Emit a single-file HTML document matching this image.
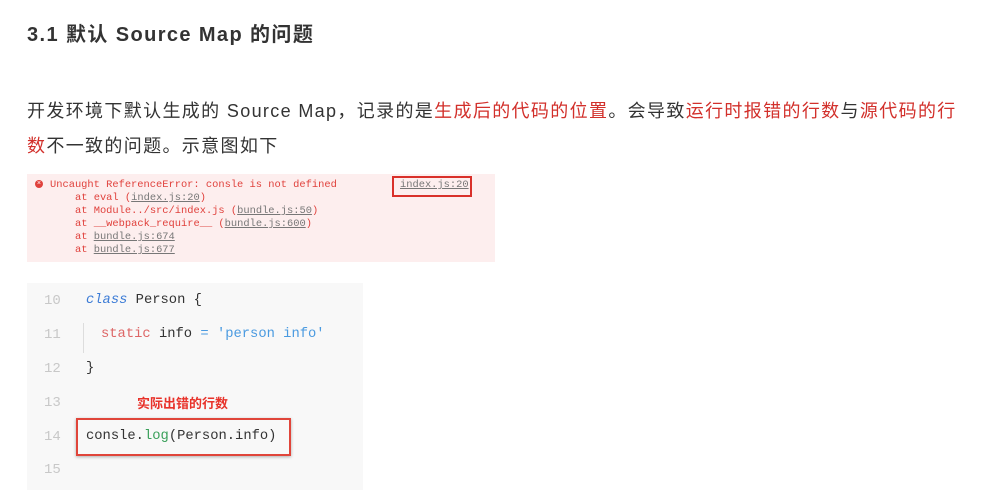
<!DOCTYPE html>
<html><head><meta charset="utf-8"><style>
body{margin:0;width:993px;height:502px;background:#fff;position:relative;overflow:hidden;font-family:"Liberation Sans","Noto Sans CJK SC",sans-serif;color:#333}
.a{position:absolute;white-space:nowrap}
h1{position:absolute;left:27px;top:18px;margin:0;font-size:20px;font-weight:bold;color:#333;letter-spacing:1.4px}
.p{font-size:18px;color:#333;left:27px;letter-spacing:1.35px}
.r{color:#d2302b}
.err{position:absolute;left:27px;top:174px;width:468px;height:88px;background:#fdeeee;font-family:"Liberation Mono",monospace;font-size:10.4px;color:#e0413c;line-height:13.2px}
.err u{color:#777}
.code{position:absolute;left:27px;top:283px;width:336px;height:207px;background:#f8f8f8;font-family:"Liberation Mono",monospace;font-size:13.8px}
.ln{position:absolute;left:17px;color:#c8c8c8;font-size:14px}
.c{position:absolute;left:59px;color:#333}
</style></head><body>
<h1>3.1 默认 Source Map 的问题</h1>
<div class="a p" style="top:97px">开发环境下默认生成的 Source Map，记录的是<span class="r">生成后的代码的位置</span>。会导致<span class="r">运行时报错的行数</span>与<span class="r">源代码的行</span></div>
<div class="a p" style="top:132px"><span class="r">数</span>不一致的问题。示意图如下</div>
<div class="err">
<div class="a" style="left:8px;top:6px;width:8px;height:8px;border-radius:50%;background:#e0413c;color:#fff;font-size:7px;line-height:8px;text-align:center">×</div>
<div class="a" style="left:23px;top:5px">Uncaught ReferenceError: consle is not defined</div>
<div class="a" style="left:48px;top:18px">at eval (<u>index.js:20</u>)</div>
<div class="a" style="left:48px;top:31px">at Module../src/index.js (<u>bundle.js:50</u>)</div>
<div class="a" style="left:48px;top:44px">at __webpack_require__ (<u>bundle.js:600</u>)</div>
<div class="a" style="left:48px;top:57px">at <u>bundle.js:674</u></div>
<div class="a" style="left:48px;top:70px">at <u>bundle.js:677</u></div>
<div class="a" style="left:373px;top:5px"><u>index.js:20</u></div>
<div class="a" style="left:365px;top:2px;width:76px;height:17px;border:2px solid #d9302a"></div>
</div>
<div class="code">
<div class="ln" style="top:10px">10</div><div class="c" style="top:10px"><i style="color:#3b7bd6">class</i> Person {</div>
<div class="ln" style="top:44px">11</div><div class="a" style="left:56px;top:40px;width:1px;height:30px;background:#ddd"></div><div class="c" style="top:44px;left:74px"><span style="color:#d66">static</span> info <span style="color:#4a9ae0">=</span> <span style="color:#4a9ae0">'person info'</span></div>
<div class="ln" style="top:78px">12</div><div class="c" style="top:78px">}</div>
<div class="ln" style="top:112px">13</div>
<div class="a" style="left:110px;top:110px;font-family:'Liberation Sans','Noto Sans CJK SC',sans-serif;font-size:13px;font-weight:bold;color:#e8322a">实际出错的行数</div>
<div class="ln" style="top:146px">14</div><div class="c" style="top:146px">consle.<span style="color:#3aa05a">log</span>(Person.info)</div>
<div class="a" style="left:49px;top:135px;width:211px;height:34px;border:2px solid #e0453a;box-shadow:0 1px 3px rgba(0,0,0,.3)"></div>
<div class="ln" style="top:179px">15</div>
</div>
</body></html>
